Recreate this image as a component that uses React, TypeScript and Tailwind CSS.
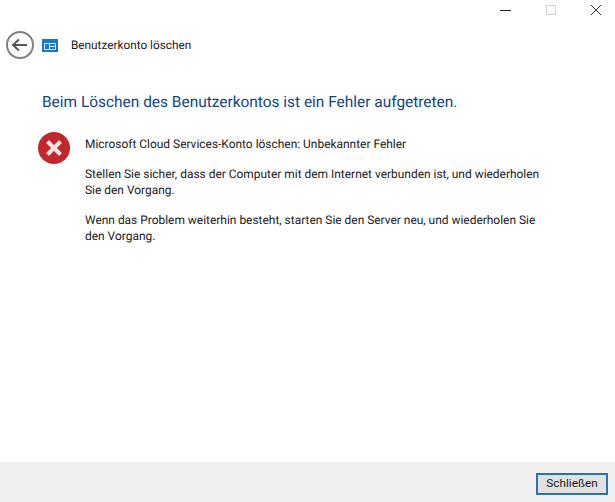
const font = { fontFamily: 'Roboto, "Open Sans", sans-serif' }

const WindowButtons = () => (
    <div className="flex h-[30px] items-start justify-end gap-[33px] pr-[13px] pt-[4px]">
        <svg width="12" height="12" viewBox="0 0 12 12"><path d="M0 6.5h11" stroke="#222" strokeWidth="1" /></svg>
        <svg width="12" height="12" viewBox="0 0 12 12"><rect x="1.5" y="1.5" width="9" height="9" fill="none" stroke="#d0d0d0" strokeWidth="1" /></svg>
        <svg width="12" height="12" viewBox="0 0 12 12"><path d="M1 1l10 10M11 1L1 11" stroke="#333" strokeWidth="1" /></svg>
    </div>
)

const BackButton = () => (
    <svg width="30" height="30" viewBox="0 0 30 30">
        <circle cx="15" cy="15" r="13" fill="none" stroke="#808080" strokeWidth="2" />
        <path d="M8 15h14M14 9.5L8 15l6 5.5" fill="none" stroke="#555" strokeWidth="2" />
    </svg>
)

const PanelIcon = () => (
    <svg width="16" height="13" viewBox="0 0 16 13">
        <rect width="16" height="13" fill="#1a78c8" />
        <path d="M2.5 4.5h11v6h-11zM7.5 4.5v6M7.5 7.5h6" fill="none" stroke="#dcecf8" strokeWidth="1" />
    </svg>
)

const ErrorIcon = () => (
    <svg width="32" height="32" viewBox="0 0 32 32">
        <circle cx="16" cy="16" r="16" fill="#c1272d" />
        <path d="M9.5 9.5l13 13M22.5 9.5l-13 13" stroke="#f4e4e4" strokeWidth="4" />
    </svg>
)

export default function App() {
    return (
        <div className="flex h-[502px] w-[615px] flex-col bg-white text-[#1a1a1a] [text-rendering:geometricPrecision]" style={font}>
            <div className="flex-1">
                <WindowButtons />
                <div className="flex items-center pl-[5px]">
                    <BackButton />
                    <div className="ml-[7px]"><PanelIcon /></div>
                    <span className="ml-[13px] mt-[2px] text-[11.8px] leading-none">Benutzerkonto löschen</span>
                </div>
                <h1 className="ml-[42px] mt-[32px] text-[15.45px] font-normal leading-5 text-[#12457f]">
                    Beim Löschen des Benutzerkontos ist ein Fehler aufgetreten.
                </h1>
                <div className="ml-[38px] mt-[20px] flex">
                    <ErrorIcon />
                    <div className="ml-[15px] w-[470px] pt-[4px] text-[11.95px] leading-4">
                        <p>Microsoft Cloud Services-Konto löschen: Unbekannter Fehler</p>
                        <p className="mt-[14px]">Stellen Sie sicher, dass der Computer mit dem Internet verbunden ist, und wiederholen Sie den Vorgang.</p>
                        <p className="mt-[14px]">Wenn das Problem weiterhin besteht, starten Sie den Server neu, und wiederholen Sie den Vorgang.</p>
                    </div>
                </div>
            </div>
            <div className="flex h-[40px] items-start justify-end bg-[#f0f0f0] pr-[7px] pt-[11px]">
                <button className="h-[22px] w-[72px] border-2 border-[#2b73b0] bg-[#e1e1e1] text-[11.8px] leading-none text-[#1a1a1a]">
                    Schließen
                </button>
            </div>
        </div>
    )
}
